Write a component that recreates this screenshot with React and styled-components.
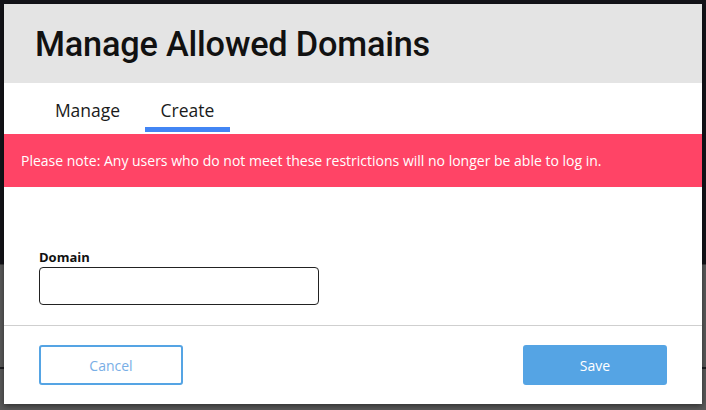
import React from "react";
import styled, { createGlobalStyle } from "styled-components";

const GlobalStyle = createGlobalStyle`
    html, body {
        margin: 0;
        padding: 0;
        width: 706px;
        height: 410px;
        overflow: hidden;
        font-family: "Open Sans", "Liberation Sans", sans-serif;
    }
`;

const Backdrop = styled.div`
    position: relative;
    width: 706px;
    height: 410px;
    display: grid;
    grid-template-rows: 264px 1fr;
    background: #141419;
`;

const PageTop = styled.div`
    background: #141419;
`;

const PageBottom = styled.div`
    background: #5b5b5b;
    border-top: 1px solid #3a3a3a;
    display: grid;
    grid-template-rows: 102px 2px 1fr;
`;

const PageRule = styled.div`
    grid-row: 2;
    background: #1e1e22;
`;

const Modal = styled.div`
    position: absolute;
    left: 4px;
    top: 4px;
    width: 698px;
    height: 400px;
    background: #ffffff;
    display: flex;
    flex-direction: column;
    box-shadow: 0 2px 6px rgba(0, 0, 0, 0.5);
`;

const Header = styled.div`
    height: 79px;
    background: #e4e4e4;
    display: flex;
    align-items: center;
    padding-left: 31px;
`;

const Title = styled.h1`
    margin: 0;
    font-family: Roboto, "Liberation Sans", sans-serif;
    font-weight: 500;
    font-size: 34.3px;
    color: #111;
    letter-spacing: -0.2px;
`;

const Tabs = styled.div`
    display: flex;
    gap: 15px;
    padding-left: 41px;
    height: 51px;
`;

const Tab = styled.div`
    width: 85px;
    height: 49px;
    font-size: 17.5px;
    color: #1a1a1a;
    display: flex;
    align-items: center;
    justify-content: center;
    padding-top: 9px;
    box-sizing: border-box;
    border-bottom: 5px solid ${(props) => (props.active ? "#4285f4" : "transparent")};
`;

const Notice = styled.div`
    height: 53px;
    background: #ff4466;
    color: #fff;
    font-size: 14px;
    display: flex;
    align-items: center;
    padding-left: 17px;
`;

const Body = styled.div`
    flex: 1;
    padding: 61px 35px 0;
    border-bottom: 1px solid #cfcfcf;
`;

const Label = styled.label`
    display: block;
    font-size: 13px;
    font-weight: 700;
    color: #111;
    margin-bottom: 1px;
`;

const Input = styled.input`
    width: 280px;
    height: 38px;
    box-sizing: border-box;
    border: 1px solid #222;
    border-radius: 4px;
    font-family: inherit;
    font-size: 14px;
    padding: 0 8px;
    outline: none;
`;

const Footer = styled.div`
    height: 78px;
    display: flex;
    justify-content: space-between;
    align-items: flex-start;
    padding: 19px 35px 0;
    box-sizing: border-box;
`;

const Button = styled.button`
    width: 144px;
    height: 40px;
    box-sizing: border-box;
    border-radius: 3px;
    font-family: inherit;
    font-size: 14px;
    cursor: pointer;
    border: 2px solid #55a4e4;
    background: ${(props) => (props.primary ? "#55a4e4" : "#fff")};
    color: ${(props) => (props.primary ? "#fff" : "#79aee6")};
`;

export default function App() {
    return (
        <>
            <GlobalStyle />
            <Backdrop>
                <PageTop />
                <PageBottom>
                    <PageRule />
                </PageBottom>
                <Modal>
                    <Header>
                        <Title>Manage Allowed Domains</Title>
                    </Header>
                    <Tabs>
                        <Tab>Manage</Tab>
                        <Tab active>Create</Tab>
                    </Tabs>
                    <Notice>
                        Please note: Any users who do not meet these restrictions will no longer be able to log in.
                    </Notice>
                    <Body>
                        <Label>Domain</Label>
                        <Input />
                    </Body>
                    <Footer>
                        <Button>Cancel</Button>
                        <Button primary>Save</Button>
                    </Footer>
                </Modal>
            </Backdrop>
        </>
    );
}
